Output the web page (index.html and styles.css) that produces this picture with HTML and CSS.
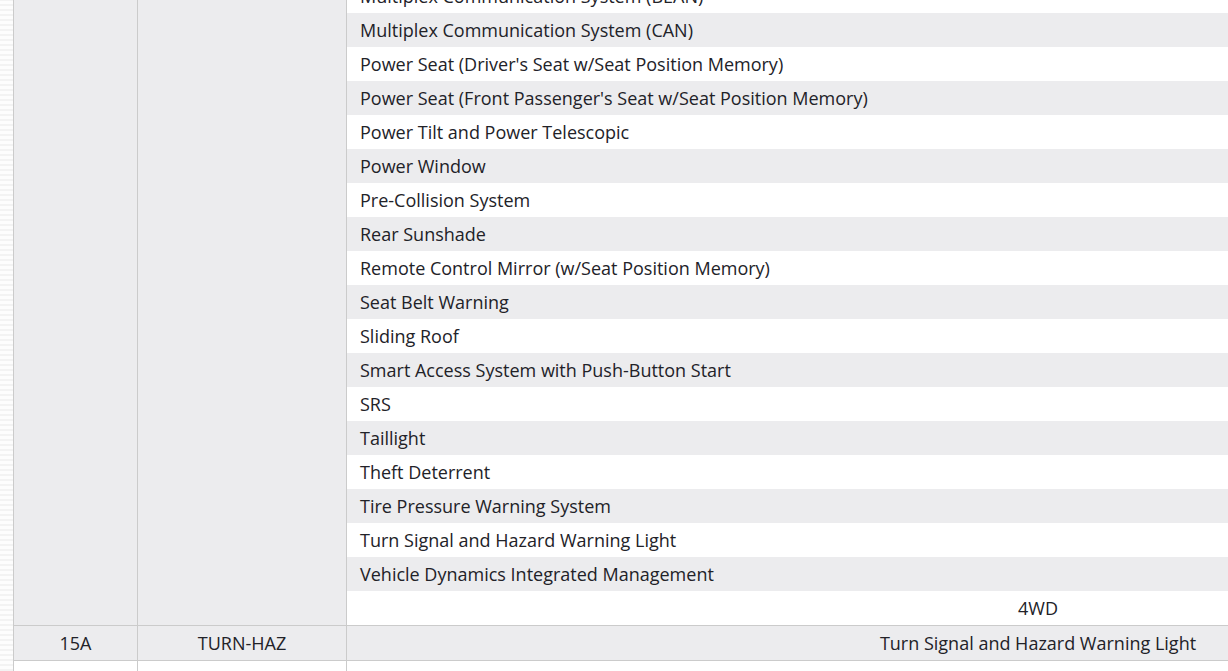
FILE: index.html
```html
<!DOCTYPE html>
<html>
<head>
<meta charset="utf-8">
<link rel="stylesheet" href="styles.css">
</head>
<body>
<div class="page">
  <div class="fuse-table">
    <div class="row row-main">
      <div class="cell c1"></div>
      <div class="cell c2"></div>
      <div class="cell c3 list">
        <div class="item">Multiplex Communication System (BEAN)</div>
        <div class="item">Multiplex Communication System (CAN)</div>
        <div class="item">Power Seat (Driver's Seat w/Seat Position Memory)</div>
        <div class="item">Power Seat (Front Passenger's Seat w/Seat Position Memory)</div>
        <div class="item">Power Tilt and Power Telescopic</div>
        <div class="item">Power Window</div>
        <div class="item">Pre-Collision System</div>
        <div class="item">Rear Sunshade</div>
        <div class="item">Remote Control Mirror (w/Seat Position Memory)</div>
        <div class="item">Seat Belt Warning</div>
        <div class="item">Sliding Roof</div>
        <div class="item">Smart Access System with Push-Button Start</div>
        <div class="item">SRS</div>
        <div class="item">Taillight</div>
        <div class="item">Theft Deterrent</div>
        <div class="item">Tire Pressure Warning System</div>
        <div class="item">Turn Signal and Hazard Warning Light</div>
        <div class="item">Vehicle Dynamics Integrated Management</div>
        <div class="item centered">4WD</div>
      </div>
    </div>
    <div class="row row-grey">
      <div class="cell c1 centered">15A</div>
      <div class="cell c2 centered">TURN-HAZ</div>
      <div class="cell c3 centered">Turn Signal and Hazard Warning Light</div>
    </div>
    <div class="row row-white">
      <div class="cell c1"></div>
      <div class="cell c2"></div>
      <div class="cell c3"></div>
    </div>
  </div>
</div>
</body>
</html>
```

FILE: styles.css
```css
html, body {
  margin: 0;
  padding: 0;
  overflow: hidden;
  height: 671px;
}
body {
  background-color: #fbfbfb;
  background-image: repeating-linear-gradient(0deg, #f3f3f3 0 2px, #fdfdfd 2px 5px);
  font-family: "Open Sans", "Liberation Sans", sans-serif;
  font-size: 18px;
  color: #222228;
}
.page {
  padding-left: 13px;
}
.fuse-table {
  display: flex;
  flex-direction: column;
  width: 1716px;
  margin-top: -22px;
  border-left: 1px solid #cbcbcb;
  border-top: 1px solid #cbcbcb;
  background: #ffffff;
}
.row {
  display: flex;
  border-bottom: 1px solid #cbcbcb;
}
.cell {
  border-right: 1px solid #cbcbcb;
  box-sizing: border-box;
}
.c1 { width: 124px; flex: none; }
.c2 { width: 209px; flex: none; }
.c3 { width: 1382px; flex: none; border-right: none; }
.row-main .c1, .row-main .c2 { background: #ececee; }
.row-grey { height: 34px; background: #ececee; }
.row-white { height: 40px; background: #ffffff; }
.row-grey .cell {
  display: flex;
  align-items: center;
  justify-content: center;
}
.list {
  display: flex;
  flex-direction: column;
}
.item {
  height: 34px;
  line-height: 34px;
  padding-left: 13px;
  white-space: nowrap;
  background: #ffffff;
}
.item:nth-child(even) { background: #ececee; }
.item.centered {
  text-align: center;
  padding-left: 0;
}
```
